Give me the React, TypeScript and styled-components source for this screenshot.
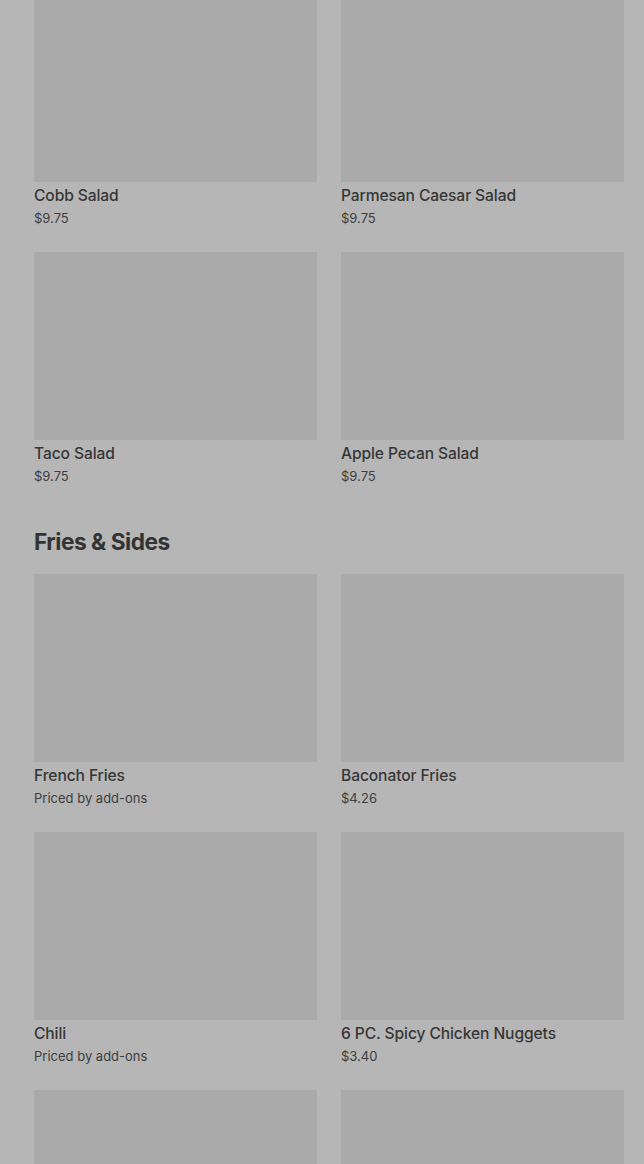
import React from 'react'
import styled, { createGlobalStyle } from 'styled-components'

const GlobalStyle = createGlobalStyle`
  html, body {
    margin: 0;
    padding: 0;
    background: #b6b6b6;
    overflow: hidden;
  }
  body {
    font-family: Inter, "Noto Sans", "Liberation Sans", sans-serif;
    color: #363636;
  }
`

const Page = styled.div`
  height: 1164px;
  overflow: hidden;
  padding: 0 20px 0 34px;
`

const Shift = styled.div`
  margin-top: -6px;
`

const Section = styled.section`
  display: flex;
  flex-direction: column;
`

const SectionTitle = styled.h2`
  margin: 40px 0 16px;
  font-size: 22.7px;
  line-height: 32px;
  font-weight: 700;
  letter-spacing: -0.5px;
  color: #333;
`

const Grid = styled.div`
  display: grid;
  grid-template-columns: 1fr 1fr;
  column-gap: 24px;
  row-gap: 24px;
`

const Card = styled.div`
  display: flex;
  flex-direction: column;
`

const Thumb = styled.div`
  height: 188px;
  background: #aaaaaa;
`

const Name = styled.div`
  margin-top: 4px;
  font-size: 15.6px;
  line-height: 20px;
  font-weight: 500;
  letter-spacing: -0.1px;
  color: #363636;
`

const Price = styled.div`
  margin-top: 2px;
  font-size: 13px;
  line-height: 20px;
  color: #3e3e3e;
`

type Item = { name?: string; price?: string }

const salads: Item[] = [
  { name: 'Cobb Salad', price: '$9.75' },
  { name: 'Parmesan Caesar Salad', price: '$9.75' },
  { name: 'Taco Salad', price: '$9.75' },
  { name: 'Apple Pecan Salad', price: '$9.75' },
]

const sides: Item[] = [
  { name: 'French Fries', price: 'Priced by add-ons' },
  { name: 'Baconator Fries', price: '$4.26' },
  { name: 'Chili', price: 'Priced by add-ons' },
  { name: '6 PC. Spicy Chicken Nuggets', price: '$3.40' },
  {},
  {},
]

const ItemGrid = ({ items }: { items: Item[] }) => (
  <Grid>
    {items.map((item, i) => (
      <Card key={i}>
        <Thumb />
        {item.name && <Name>{item.name}</Name>}
        {item.price && <Price>{item.price}</Price>}
      </Card>
    ))}
  </Grid>
)

const App = () => {
  return (
    <Page>
      <GlobalStyle />
      <Shift>
        <Section>
          <ItemGrid items={salads} />
        </Section>
        <Section>
          <SectionTitle>Fries &amp; Sides</SectionTitle>
          <ItemGrid items={sides} />
        </Section>
      </Shift>
    </Page>
  )
}

export default App
